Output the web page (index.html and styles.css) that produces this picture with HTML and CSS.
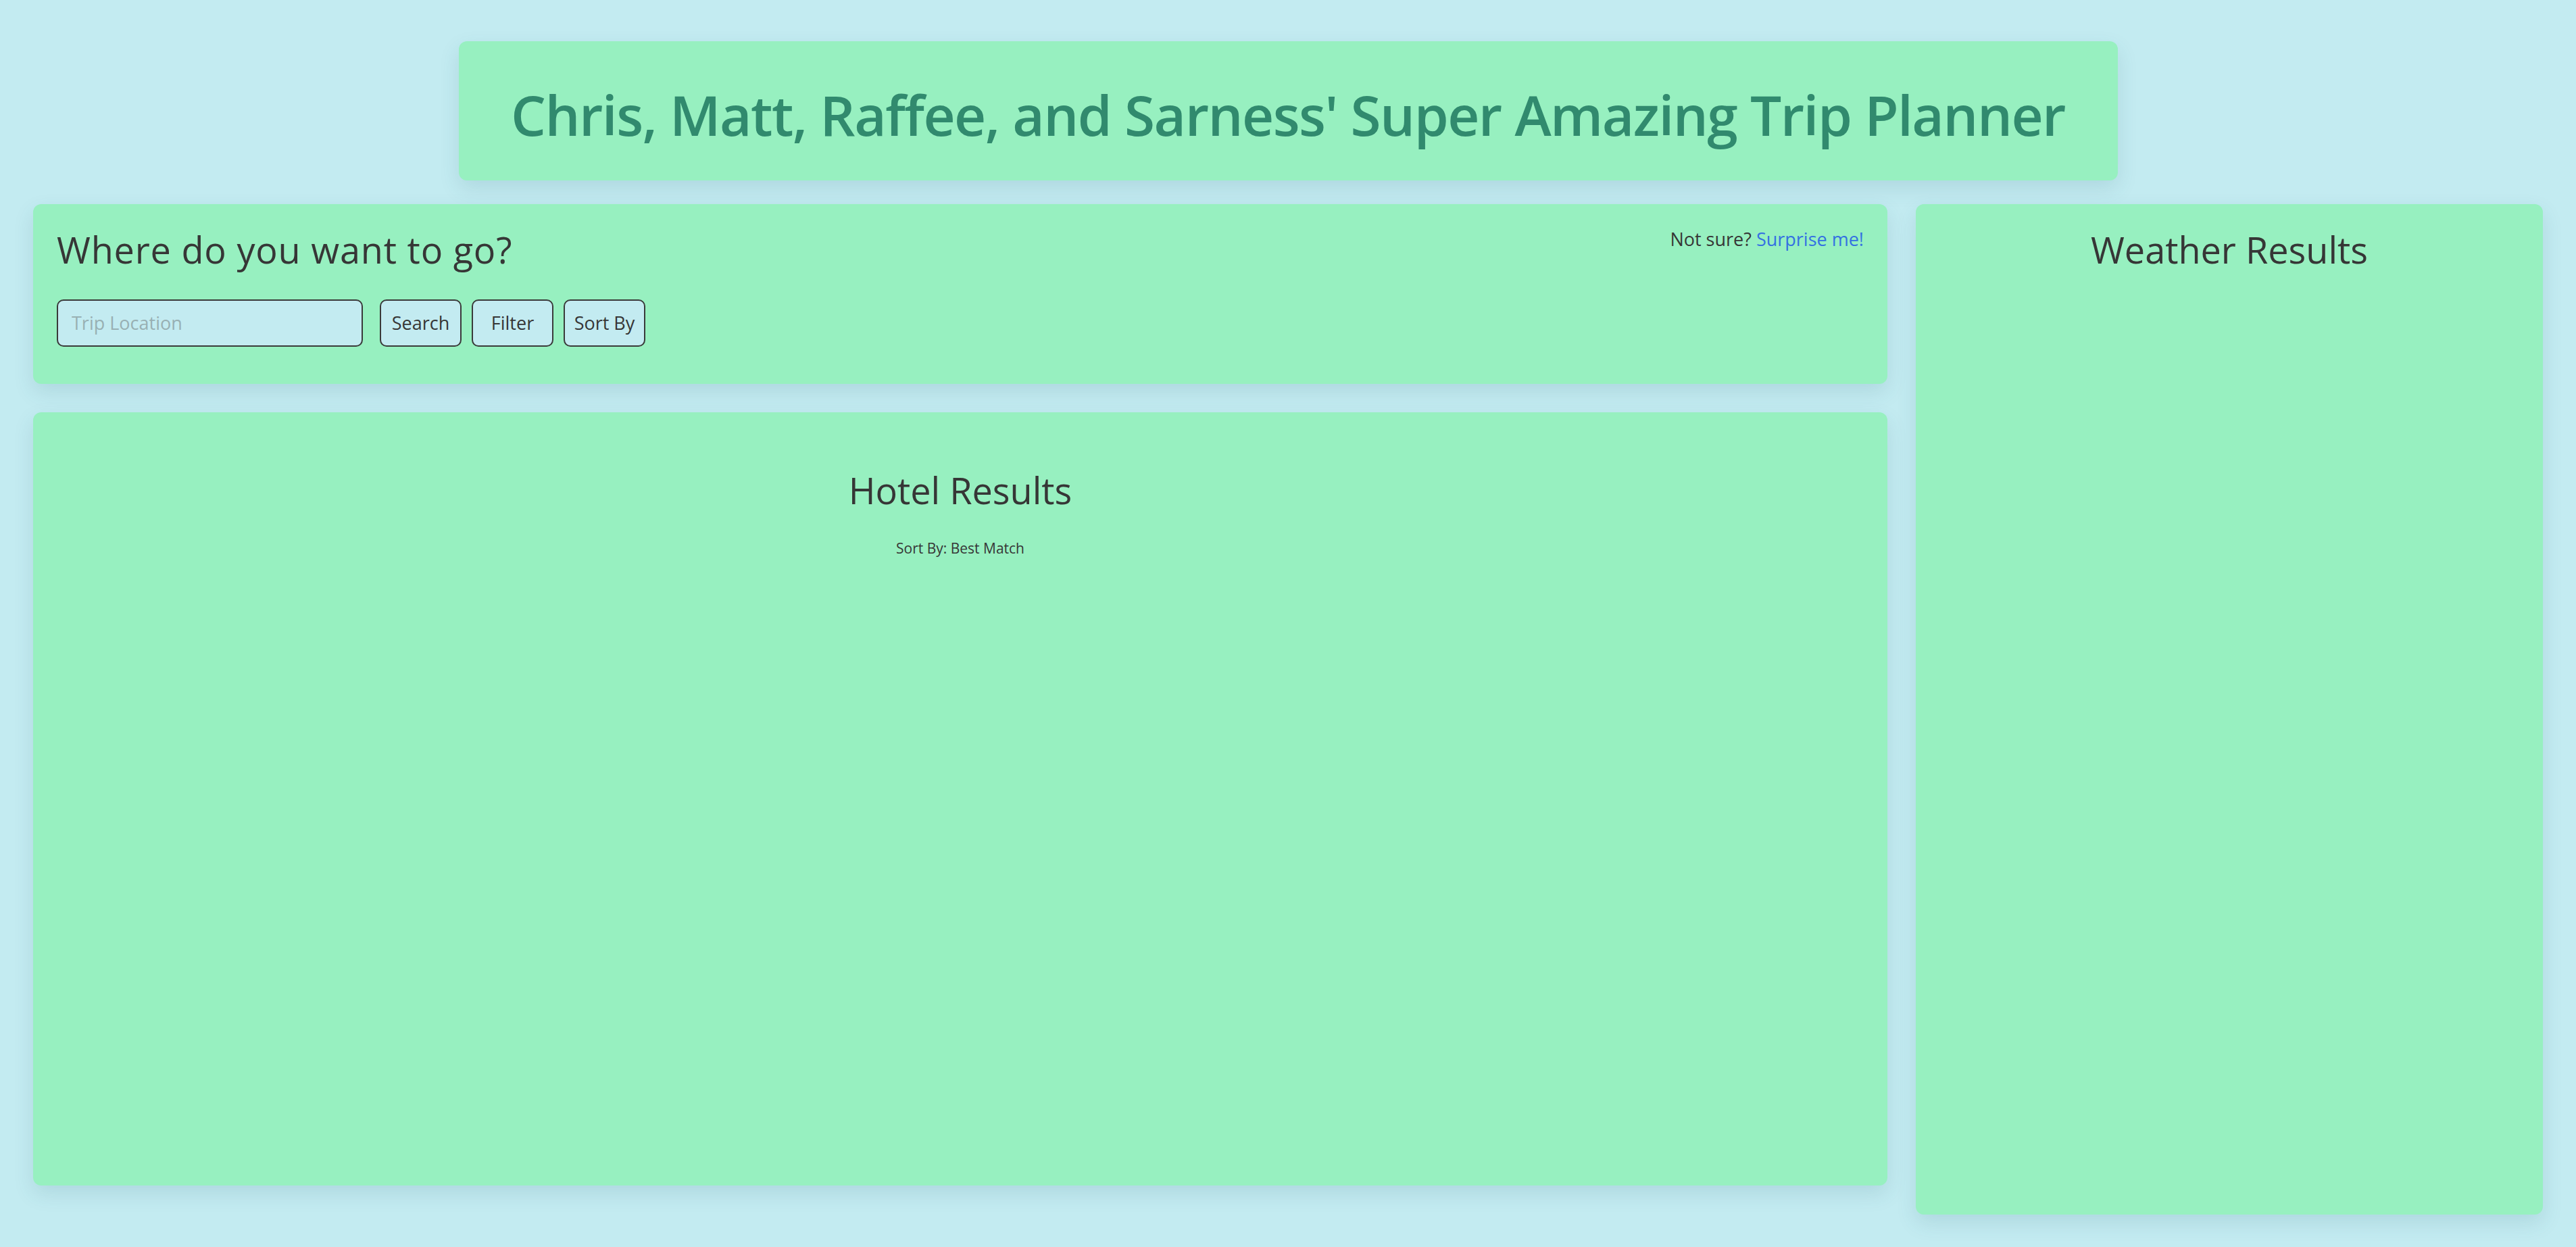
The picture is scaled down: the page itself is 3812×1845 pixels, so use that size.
FILE: index.html
```html
<!DOCTYPE html>
<html lang="en">
<head>
<meta charset="utf-8">
<title>Trip Planner</title>
<link rel="stylesheet" href="styles.css">
</head>
<body>
<header class="title-card">
  <h1 class="title">Chris, Matt, Raffee, and Sarness' Super Amazing Trip Planner</h1>
</header>
<main class="layout">
  <section class="left-col">
    <div class="card search-card">
      <div class="search-main">
        <h2 class="heading">Where do you want to go?</h2>
        <form class="search-form">
          <input class="location-input" type="text" placeholder="Trip Location">
          <button class="btn" type="button">Search</button>
          <button class="btn" type="button">Filter</button>
          <button class="btn" type="button">Sort By</button>
        </form>
      </div>
      <p class="surprise">Not sure? <a class="surprise-link" href="#">Surprise me!</a></p>
    </div>
    <div class="card hotel-card">
      <h2 class="heading hotel-heading">Hotel Results</h2>
      <p class="sort-label">Sort By: Best Match</p>
    </div>
  </section>
  <aside class="card weather-card">
    <h2 class="heading">Weather Results</h2>
  </aside>
</main>
</body>
</html>
```

FILE: styles.css
```css
html, body {
  margin: 0;
  padding: 0;
}

body {
  background: #c3ebf1;
  font-family: "Open Sans", "Noto Sans", "DejaVu Sans", sans-serif;
  color: #363636;
  font-size: 28px;
  line-height: 1.5;
  padding-top: 61px;
  min-height: 1845px;
  box-sizing: border-box;
}

.card {
  background: #97f0c0;
  border-radius: 12px;
  box-shadow: 0 12px 30px rgba(40, 90, 110, 0.13);
  box-sizing: border-box;
}

.title-card {
  width: 2455px;
  height: 206px;
  margin: 0 auto;
  background: #97f0c0;
  border-radius: 12px;
  box-shadow: 0 12px 30px rgba(40, 90, 110, 0.13);
  box-sizing: border-box;
  padding-top: 59px;
  text-align: center;
}

.title {
  margin: 0;
  font-size: 82px;
  line-height: 1.2;
  font-weight: 600;
  color: #318a6e;
  letter-spacing: -1.55px;
  white-space: nowrap;
}

.layout {
  display: grid;
  grid-template-columns: 1fr 928px;
  column-gap: 42px;
  align-items: start;
  padding: 0 49px;
  margin-top: 35px;
}

.left-col {
  display: flex;
  flex-direction: column;
  gap: 42px;
}

.heading {
  margin: 0;
  font-size: 54px;
  line-height: 1.2;
  font-weight: 500;
  color: #363636;
}

.search-card {
  height: 266px;
  padding: 35px;
  display: flex;
  justify-content: space-between;
  align-items: flex-start;
}

.search-main .heading {
  margin-bottom: 41px;
  letter-spacing: 0.8px;
}

.search-form {
  display: flex;
  gap: 15px;
  margin: 0;
}

.location-input {
  width: 453px;
  height: 70px;
  box-sizing: border-box;
  background: #c3ebf1;
  border: 2px solid #3a3a3a;
  border-radius: 10px;
  padding: 0 20px;
  font-family: inherit;
  font-size: 27px;
  color: #363636;
  margin-right: 10px;
}

.location-input::placeholder {
  color: #98b0b3;
}

.btn {
  width: 121px;
  height: 70px;
  box-sizing: border-box;
  background: #c3ebf1;
  border: 2px solid #3a3a3a;
  border-radius: 10px;
  font-family: inherit;
  font-size: 27px;
  color: #363636;
  padding: 0;
}

.surprise {
  margin: -3px 0 0;
  font-size: 27px;
  color: #363636;
  white-space: nowrap;
}

.surprise-link {
  color: #3470e2;
  text-decoration: none;
}

.hotel-card {
  height: 1144px;
  padding: 83px 35px 35px;
  text-align: center;
}

.sort-label {
  margin: 38px 0 0;
  font-size: 21px;
  line-height: 1.5;
  color: #363636;
}

.weather-card {
  height: 1495px;
  padding: 35px;
  text-align: center;
}
```
